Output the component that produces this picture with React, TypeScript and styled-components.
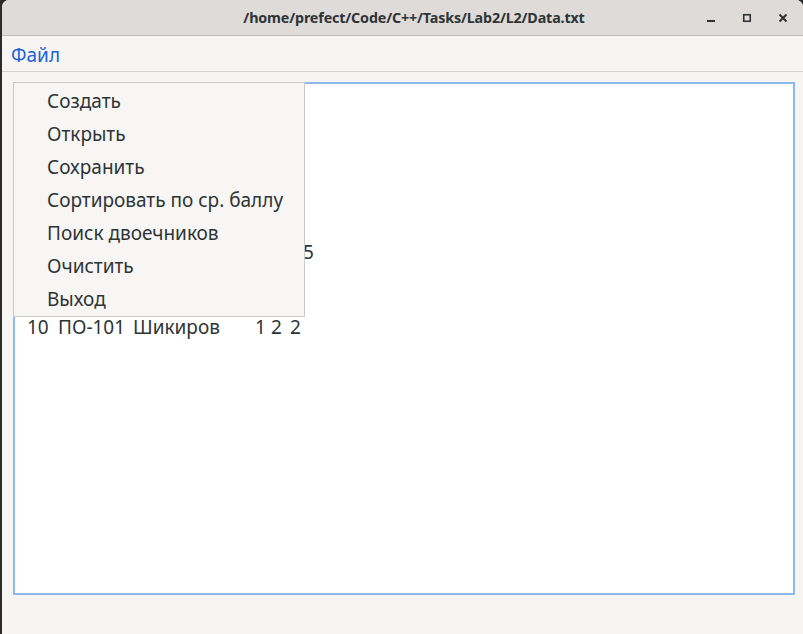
import React from "react";
import styled, { createGlobalStyle } from "styled-components";

const Global = createGlobalStyle`
  html, body { margin: 0; padding: 0; background: #2a2a2a; }
  body { width: 803px; height: 634px; overflow: hidden; font-family: "Noto Sans", "DejaVu Sans", sans-serif; }
`;

const Screen = styled.div`
  width: 803px;
  height: 634px;
  display: flex;
  background: #262626;
`;

const EdgeStrip = styled.div`
  width: 2px;
  flex: none;
  background: #2c2c2c;
`;

const Window = styled.div`
  position: relative;
  flex: 1;
  display: flex;
  flex-direction: column;
  background: #f6f5f4;
  border-top-left-radius: 7px;
  border-top-right-radius: 7px;
  overflow: hidden;
`;

const TitleBar = styled.div`
  height: 35px;
  flex: none;
  display: flex;
  align-items: center;
  justify-content: center;
  position: relative;
  background: #dedbd8;
  border-bottom: 1px solid #bfbbb6;
`;

const Title = styled.div`
  font-family: "Noto Sans", sans-serif;
  font-weight: 700;
  font-size: 14.3px;
  color: #2e3436;
  margin-left: 23px;
  letter-spacing: -0.15px;
`;

const Controls = styled.div`
  position: absolute;
  right: 12px;
  top: 0;
  height: 35px;
  display: flex;
  align-items: center;
  gap: 20px;
`;

const CtrlBtn = styled.div`
  width: 16px;
  height: 16px;
  display: flex;
  align-items: center;
  justify-content: center;
`;

const MenuBar = styled.div`
  height: 36px;
  flex: none;
  display: flex;
  align-items: center;
  padding: 2px 0 0 9px;
  box-sizing: border-box;
  border-bottom: 1px solid #d6d2cd;
  background: #f6f5f4;
`;

const MenuTitle = styled.span`
  font-size: 19px;
  color: #1c63d3;
`;

const Body = styled.div`
  flex: 1;
  padding: 10px 8px 39px 11px;
  display: flex;
`;

const Editor = styled.div`
  flex: 1;
  background: #fff;
  border: 2px solid #8fb9ea;
  padding: 6px 0 0 12px;
  font-size: 19px;
  color: #2e3436;
`;

const Line = styled.div`
  height: 25px;
  line-height: 25px;
  white-space: pre;
  display: flex;
`;

const Cell = styled.span<{ $w?: number }>`
  display: inline-block;
  width: ${(p) => (p.$w ? `${p.$w}px` : "auto")};
  white-space: pre;
`;

const Popup = styled.div`
  position: absolute;
  left: 11px;
  top: 82px;
  width: 292px;
  height: 235px;
  box-sizing: border-box;
  background: #f7f6f4;
  border: 1px solid #cdc8c3;
  padding-top: 2px;
  display: flex;
  flex-direction: column;
`;

const Item = styled.div`
  height: 33px;
  line-height: 33px;
  padding-left: 33px;
  font-size: 19px;
  color: #2e3436;
  white-space: nowrap;
`;

const rows: [string, string, string, string[]][] = [
  ["1", "ПО-101", "Иванов", ["4", "5", "4"]],
  ["2", "ПО-101", "Петров", ["3", "4", "5"]],
  ["3", "ПО-102", "Сидоров", ["2", "3", "4"]],
  ["4", "ПО-101", "Смирнов", ["5", "5", "4"]],
  ["5", "ПО-102", "Кузнецов", ["4", "4", "3"]],
  ["6", "ПО-101", "Попов", ["3", "3", "4"]],
  ["7", "ПО-102", "Александров", ["4", "5", "5"]],
  ["8", "ПО-101", "Волков", ["5", "4", "4"]],
  ["9", "ПО-102", "Соколов", ["3", "4", "3"]],
  ["10", "ПО-101", "Шикиров", ["1", "2", "2"]],
];

const items = [
  "Создать",
  "Открыть",
  "Сохранить",
  "Сортировать по ср. баллу",
  "Поиск двоечников",
  "Очистить",
  "Выход",
];

export default function App() {
  return (
    <>
      <Global />
      <Screen>
        <EdgeStrip />
        <Window>
          <TitleBar>
            <Title>/home/prefect/Code/C++/Tasks/Lab2/L2/Data.txt</Title>
            <Controls>
              <CtrlBtn>
                <svg width="16" height="16" viewBox="0 0 16 16">
                  <rect x="4" y="10" width="8" height="2" fill="#2e3436" />
                </svg>
              </CtrlBtn>
              <CtrlBtn>
                <svg width="16" height="16" viewBox="0 0 16 16">
                  <rect x="4.75" y="4.75" width="6.5" height="6.5" fill="none" stroke="#2e3436" strokeWidth="1.6" />
                </svg>
              </CtrlBtn>
              <CtrlBtn>
                <svg width="16" height="16" viewBox="0 0 16 16">
                  <path d="M4.5 4.5 L11.5 11.5 M11.5 4.5 L4.5 11.5" stroke="#2e3436" strokeWidth="2" />
                </svg>
              </CtrlBtn>
            </Controls>
          </TitleBar>
          <MenuBar>
            <MenuTitle>Файл</MenuTitle>
          </MenuBar>
          <Body>
            <Editor>
              {rows.map(([n, g, name, grades]) => (
                <Line key={n}>
                  <Cell $w={31}>{n}</Cell>
                  <Cell $w={75}>{g}</Cell>
                  <Cell $w={name.length > 8 ? 135 : 122}>{name}</Cell>
                  <Cell $w={16}>{grades[0]}</Cell>
                  <Cell $w={19}>{grades[1]}</Cell>
                  <Cell>{grades[2]}</Cell>
                </Line>
              ))}
            </Editor>
          </Body>
          <Popup>
            {items.map((it) => (
              <Item key={it}>{it}</Item>
            ))}
          </Popup>
        </Window>
      </Screen>
    </>
  );
}
